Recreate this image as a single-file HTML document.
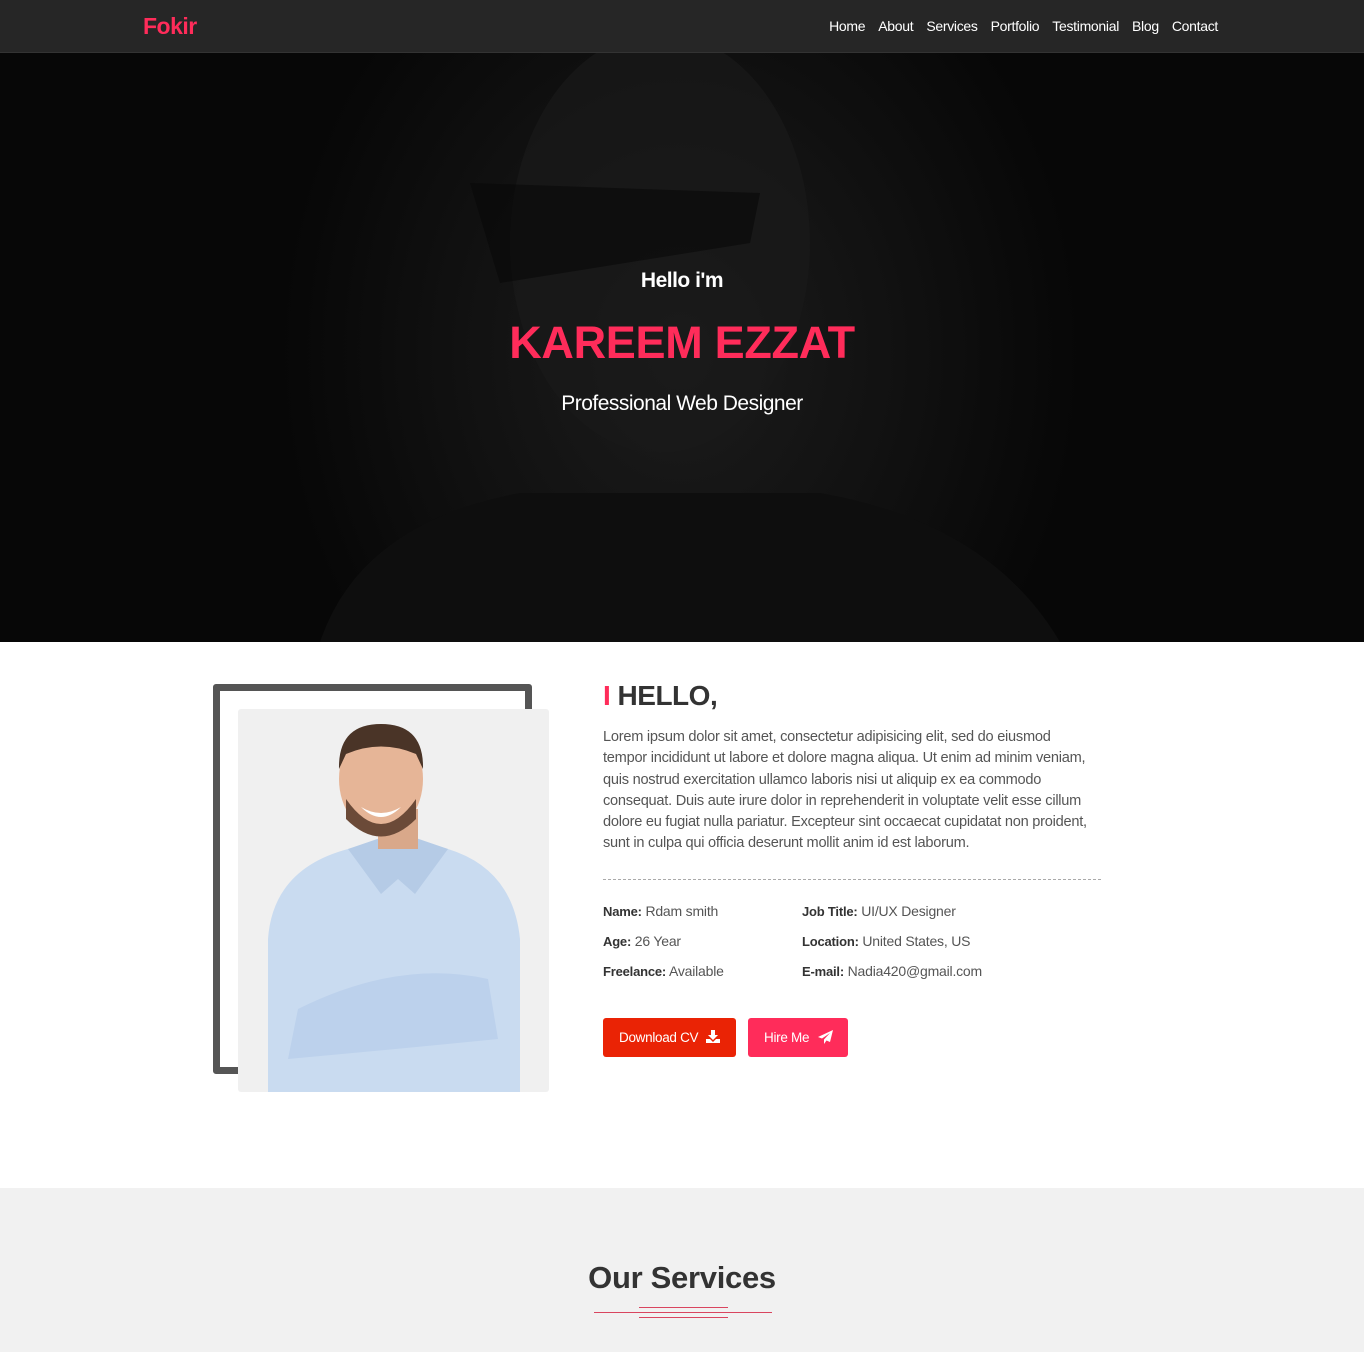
<!DOCTYPE html>
<html><head><meta charset="utf-8"><style>
*{margin:0;padding:0;box-sizing:border-box}
body{width:1364px;height:1352px;overflow:hidden;font-family:"Liberation Sans",sans-serif;background:#fff;position:relative}
.nav{position:absolute;left:0;top:0;width:1364px;height:53px;background:#262626;border-bottom:1px solid #333}
.logo{position:absolute;left:143px;top:13px;color:#ff2c5a;font-weight:bold;font-size:23px;letter-spacing:-0.5px}
.menu{position:absolute;right:146px;top:18px;font-size:14px;color:#fff;letter-spacing:-0.3px}
.menu span{margin-left:13px}
.hero{position:absolute;left:0;top:53px;width:1364px;height:589px;background:radial-gradient(ellipse 400px 480px at 680px 300px,#1c1c1c 0%,#111 55%,#070707 100%);overflow:hidden}
.ht{position:absolute;width:100%;text-align:center;color:#fff}
.frame{position:absolute;left:213px;top:684px;width:319px;height:390px;border:7px solid #555;border-radius:3px}
.photo{position:absolute;left:238px;top:709px;width:311px;height:383px;background:#f0f0f0;border-radius:3px;overflow:hidden}
.h2{position:absolute;left:603px;top:680px;font-size:28px;font-weight:bold;color:#333;letter-spacing:-0.5px}
.p{position:absolute;left:603px;top:727px;font-size:14.6px;line-height:21.3px;color:#555;white-space:nowrap;letter-spacing:-0.25px}
.dash{position:absolute;left:603px;top:879px;width:498px;border-top:1px dashed #aaa}
.info{position:absolute;font-size:14px;color:#555;letter-spacing:-0.2px}
.info b{color:#333;font-size:13px}
.btn{position:absolute;top:1018px;height:39px;color:#fff;font-size:13.5px;line-height:39px;border-radius:3px;padding-left:16px;letter-spacing:-0.3px}
.svc{position:absolute;left:0;top:1188px;width:1364px;height:164px;background:#f1f1f1}
</style></head><body>
<div class="nav"><div class="logo">Fokir</div>
<div class="menu"><span>Home</span><span>About</span><span>Services</span><span>Portfolio</span><span>Testimonial</span><span>Blog</span><span>Contact</span></div></div>
<div class="hero">
<svg width="1364" height="589" style="position:absolute;left:0;top:0">
<ellipse cx="660" cy="190" rx="150" ry="210" fill="#1a1a1a" opacity=".7"/>
<path d="M320 589 Q360 470 520 440 L820 440 Q990 470 1060 589Z" fill="#0e0e0e"/>
<path d="M470 130 L760 140 L750 190 L500 230Z" fill="#080808" opacity=".6"/>
</svg>
<div class="ht" style="top:216px;font-size:21px;font-weight:bold;letter-spacing:-0.5px">Hello i'm</div>
<div class="ht" style="top:264px;font-size:45px;font-weight:bold;color:#ff2c5a;letter-spacing:-0.3px">KAREEM EZZAT</div>
<div class="ht" style="top:339px;font-size:21px;letter-spacing:-0.5px">Professional Web Designer</div>
</div>
<div class="frame"></div>
<div class="photo">
<svg width="311" height="383">
<path d="M30 383 L30 230 Q35 160 110 140 L145 130 L175 130 L210 140 Q275 160 282 230 L282 383Z" fill="#c9dbf0"/>
<path d="M110 140 L143 185 L160 170 L177 185 L210 140 L175 128 L145 128Z" fill="#b5cbe6"/>
<path d="M60 300 Q160 250 250 270 L260 330 Q160 340 50 350Z" fill="#bcd1ec"/>
<rect x="140" y="100" width="40" height="40" fill="#d9a88a"/>
<ellipse cx="143" cy="70" rx="42" ry="55" fill="#e6b597"/>
<path d="M101 60 Q100 15 143 15 Q186 15 185 60 L178 45 Q143 30 108 45Z" fill="#4a3427"/>
<path d="M108 90 Q143 140 178 90 L178 110 Q143 145 108 110Z" fill="#6b4a38"/>
<path d="M123 98 Q143 110 163 98 Q143 118 123 98Z" fill="#fff"/>
</svg></div>
<div class="h2"><span style="color:#ff2c5a">I</span> HELLO,</div>
<div class="p">Lorem ipsum dolor sit amet, consectetur adipisicing elit, sed do eiusmod<br>tempor incididunt ut labore et dolore magna aliqua. Ut enim ad minim veniam,<br>quis nostrud exercitation ullamco laboris nisi ut aliquip ex ea commodo<br>consequat. Duis aute irure dolor in reprehenderit in voluptate velit esse cillum<br>dolore eu fugiat nulla pariatur. Excepteur sint occaecat cupidatat non proident,<br>sunt in culpa qui officia deserunt mollit anim id est laborum.</div>
<div class="dash"></div>
<div class="info" style="left:603px;top:903px"><b>Name:</b> Rdam smith</div>
<div class="info" style="left:603px;top:933px"><b>Age:</b> 26 Year</div>
<div class="info" style="left:603px;top:963px"><b>Freelance:</b> Available</div>
<div class="info" style="left:802px;top:903px"><b>Job Title:</b> UI/UX Designer</div>
<div class="info" style="left:802px;top:933px"><b>Location:</b> United States, US</div>
<div class="info" style="left:802px;top:963px"><b>E-mail:</b> Nadia420@gmail.com</div>
<div class="btn" style="left:603px;width:133px;background:#ea2305">Download CV <svg width="14" height="13" viewBox="0 0 14 13" style="vertical-align:-1px;margin-left:4px"><path d="M5 0h4v5h3l-5 5-5-5h3z M0 9h4l3 3 3-3h4v4H0z" fill="#fff"/></svg></div>
<div class="btn" style="left:748px;width:100px;background:#ff2c5a">Hire Me <svg width="15" height="14" viewBox="0 0 15 14" style="vertical-align:-2px;margin-left:5px"><path d="M15 0L0 7l4 1.5L12 3 6 9.5V14l2.5-3.5L12 12z" fill="#fff"/></svg></div>
<div class="svc">
<div style="position:absolute;width:100%;text-align:center;top:72px;font-size:31px;font-weight:bold;color:#333;letter-spacing:-0.3px">Our Services</div>
<div style="position:absolute;left:594px;top:124px;width:178px;height:1px;background:#d9455f"></div>
<div style="position:absolute;left:639px;top:119px;width:89px;height:1px;background:#d9455f"></div>
<div style="position:absolute;left:639px;top:129px;width:89px;height:1px;background:#d9455f"></div>
</div>
</body></html>
